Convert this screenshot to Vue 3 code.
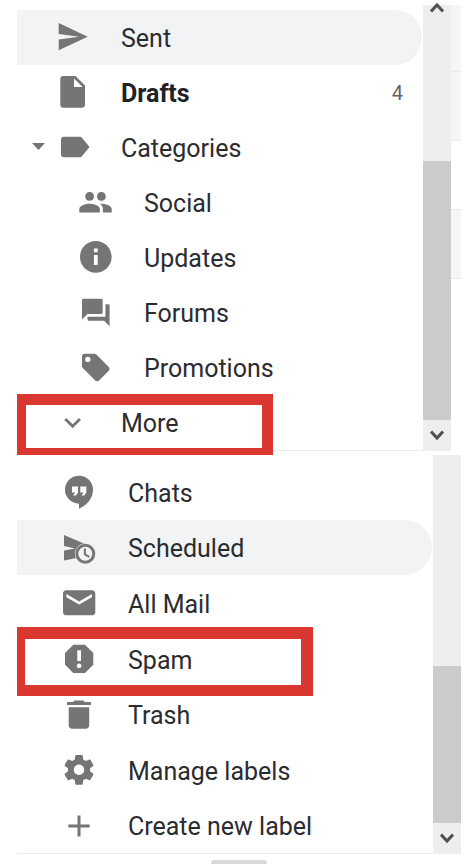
<script setup>
const folders = [
  { id: 'sent', label: 'Sent', active: true },
  { id: 'drafts', label: 'Drafts', bold: true, count: 4 },
  { id: 'categories', label: 'Categories', caret: true },
  { id: 'social', label: 'Social', nested: true },
  { id: 'updates', label: 'Updates', nested: true },
  { id: 'forums', label: 'Forums', nested: true },
  { id: 'promotions', label: 'Promotions', nested: true },
  { id: 'more', label: 'More', mark: 'mark-more' },
]

const extras = [
  { id: 'chats', label: 'Chats' },
  { id: 'scheduled', label: 'Scheduled', active: true },
  { id: 'all-mail', label: 'All Mail' },
  { id: 'spam', label: 'Spam', mark: 'mark-spam' },
  { id: 'trash', label: 'Trash' },
  { id: 'manage', label: 'Manage labels' },
  { id: 'create', label: 'Create new label' },
]

const panels = [
  { id: 'upper', name: 'Folders', rows: folders },
  { id: 'lower', name: 'More folders', rows: extras },
]

const icons = {
  sent: { d: 'M4.7 4L33.7 17.7 4.7 31.3V20.6L25 17.7 4.7 15z' },
  drafts: { d: 'M9.3 2H21.5L31 11.5V30.7a3 3 0 0 1-3 3H9.3a3 3 0 0 1-3-3V5a3 3 0 0 1 3-3zM20 4.6V13H28.6z' },
  categories: { d: 'M10 7.7H25.5c1.2 0 2 .5 2.7 1.4L35.5 18l-7.3 8.9c-.7.9-1.5 1.4-2.7 1.4H10a3 3 0 0 1-3-3V10.7a3 3 0 0 1 3-3z' },
  social: {
    t: 'translate(.83 .63) scale(1.473)',
    d: 'M16 11c1.66 0 2.99-1.34 2.99-3S17.66 5 16 5c-1.66 0-3 1.34-3 3s1.34 3 3 3zm-8 0c1.66 0 2.99-1.34 2.99-3S9.66 5 8 5C6.34 5 5 6.34 5 8s1.34 3 3 3zm0 2c-2.33 0-7 1.17-7 3.5V19h14v-2.5c0-2.33-4.67-3.5-7-3.5zm8 0c-.29 0-.62.02-.97.05 1.16.84 1.97 1.97 1.97 3.45V19h6v-2.5c0-2.33-4.67-3.5-7-3.5z',
  },
  updates: {
    t: 'translate(-.16 -1.06) scale(1.58)',
    d: 'M12 2C6.48 2 2 6.48 2 12s4.48 10 10 10 10-4.48 10-10S17.52 2 12 2zm1.2 15.2h-2.4v-6.4h2.4zm0-8.2h-2.4V6.7h2.4z',
  },
  forums: {
    t: 'translate(2.24 1.94) scale(1.38)',
    d: 'M21 6h-2v9H6v2c0 .55.45 1 1 1h11l4 4V7c0-.55-.45-1-1-1zm-4 6V3c0-.55-.45-1-1-1H3c-.55 0-1 .45-1 1v14l4-4h10c.55 0 1-.45 1-1z',
  },
  promotions: {
    t: 'translate(2.24 1.94) scale(1.38)',
    d: 'M21.41 11.58l-9-9C12.05 2.22 11.55 2 11 2H4c-1.1 0-2 .9-2 2v7c0 .55.22 1.05.59 1.42l9 9c.36.36.86.58 1.41.58.55 0 1.05-.22 1.41-.59l7-7c.37-.36.59-.86.59-1.41 0-.55-.23-1.06-.59-1.42zM6.2 8.1a1.9 1.9 0 1 1 0-3.8 1.9 1.9 0 0 1 0 3.8z',
  },
  more: {
    t: 'translate(1.96 2.06) scale(1.39)',
    d: 'M16.59 8.59L12 13.17 7.41 8.59 6 10l6 6 6-6z',
  },
  chats: {
    d: 'M18 1.7A14 14 0 0 1 32 15.7C32 24 26 31.5 18 34.7V29.7A14 14 0 0 1 18 1.7zM11 12.4V18.4H14.2L12.2 21.4H15L17 18.4V12.4zM19.3 12.4V18.4H22.5L20.5 21.4H23.3L25.3 18.4V12.4z',
  },
  scheduled: {
    d: 'M3 5L29.5 16.2 24.3 23.8 15.5 28 3 30.6V20.6L14 18.4 3 16z',
    clock: true,
  },
  'all-mail': {
    t: 'translate(-1.23 -.94) scale(1.615 1.56)',
    d: 'M20 4H4c-1.1 0-2 .9-2 2v12c0 1.1.9 2 2 2h16c1.1 0 2-.9 2-2V6c0-1.1-.9-2-2-2zm-.1 4.4L12 13.1 4.1 8.4V6.4L12 11.1l7.9-4.7z',
  },
  spam: {
    t: 'translate(-.7 -1) scale(1.57)',
    d: 'M15.73 3H8.27L3 8.27v7.46L8.27 21h7.46L21 15.73V8.27L15.73 3zM12 17.9c-.9 0-1.5-.7-1.5-1.5s.7-1.5 1.5-1.5 1.5.7 1.5 1.5-.7 1.5-1.5 1.5zm1.2-4.5h-2.4V6.5h2.4z',
  },
  trash: {
    t: 'translate(-2.55 -1.3) scale(1.71 1.57)',
    d: 'M6 19c0 1.1.9 2 2 2h8c1.1 0 2-.9 2-2V7.4H6zM19 4h-3.5l-1-1h-5l-1 1H5v2h14z',
  },
  manage: {
    t: 'translate(.2 0) scale(1.485)',
    d: 'M19.43 12.98c.04-.32.07-.64.07-.98s-.03-.66-.07-.98l2.11-1.65c.19-.15.24-.42.12-.64l-2-3.46c-.12-.22-.39-.3-.61-.22l-2.49 1c-.52-.4-1.08-.73-1.69-.98l-.38-2.65C14.46 2.18 14.25 2 14 2h-4c-.25 0-.46.18-.49.42l-.38 2.65c-.61.25-1.17.59-1.69.98l-2.49-1c-.23-.09-.49 0-.61.22l-2 3.46c-.13.22-.07.49.12.64l2.11 1.65c-.04.32-.07.65-.07.98s.03.66.07.98l-2.11 1.65c-.19.15-.24.42-.12.64l2 3.46c.12.22.39.3.61.22l2.49-1c.52.4 1.08.73 1.69.98l.38 2.65c.03.24.24.42.49.42h4c.25 0 .46-.18.49-.42l.38-2.65c.61-.25 1.17-.59 1.69-.98l2.49 1c.23.09.49 0 .61-.22l2-3.46c.12-.22.07-.49-.12-.64l-2.11-1.65zM12 15.5c-1.93 0-3.5-1.57-3.5-3.5s1.57-3.5 3.5-3.5 3.5 1.57 3.5 3.5-1.57 3.5-3.5 3.5z',
  },
  create: { d: 'M16.5 7.4H19.5V16.5H28.7V19.5H19.5V28.6H16.5V19.5H7.3V16.5H16.5z' },
}
</script>

<template>
  <main class="page">
    <section v-for="panel in panels" :key="panel.id" class="panel" :class="panel.id">
      <nav class="list" :aria-label="panel.name">
        <a
          v-for="row in panel.rows"
          :key="row.id"
          :href="'#' + row.id"
          class="row"
          :class="{ active: row.active, bold: row.bold, nested: row.nested }"
        >
          <svg v-if="row.caret" class="caret" viewBox="0 0 13 7" aria-hidden="true">
            <path d="M0 0h13L6.5 7z" />
          </svg>
          <svg class="icon" viewBox="0 0 37 37" aria-hidden="true">
            <path :d="icons[row.id].d" :transform="icons[row.id].t" fill-rule="evenodd" />
            <g v-if="icons[row.id].clock">
              <circle class="clock-gap" cx="24.3" cy="23.8" r="10.5" />
              <circle class="clock-face" cx="24.3" cy="23.8" r="8.5" />
              <path class="clock-hand" d="M23.9 18.5V24.3L28.3 26.8" />
            </g>
          </svg>
          <span class="label">{{ row.label }}</span>
          <span v-if="row.count" class="count">{{ row.count }}</span>
          <span v-if="row.mark" class="mark" :class="row.mark"></span>
        </a>
      </nav>
      <div class="scrollbar">
        <button v-if="panel.id === 'upper'" class="arrow up" type="button" aria-label="Scroll up">
          <svg viewBox="0 0 14 11"><path d="M1 9.5L7 3L13 9.5" /></svg>
        </button>
        <div class="thumb"></div>
        <button class="arrow down" type="button" aria-label="Scroll down">
          <svg viewBox="0 0 14 11"><path d="M1 1.5L7 8L13 1.5" /></svg>
        </button>
      </div>
      <div v-if="panel.id === 'upper'" class="edge">
        <span></span><span></span><span class="blank"></span><span></span>
      </div>
    </section>
    <div class="handle"></div>
  </main>
</template>

<style>
body {
  background: #fff;
}
</style>

<style scoped>
.page {
  padding: 5px 13px 3px 17px;
  font-family: Roboto, "Liberation Sans", sans-serif;
  font-size: 25px;
  line-height: 28px;
  color: #2b2c30;
}

.panel {
  display: flex;
}

.upper {
  margin-bottom: 4px;
}

.list {
  flex: 1;
  display: flex;
  flex-direction: column;
  border-bottom: 1px solid #ececee;
}

.upper .list {
  padding-top: 5px;
}

.lower .list {
  padding-top: 9px;
  min-height: 389px;
}

.row {
  position: relative;
  display: flex;
  flex: 1 0 55px;
  box-sizing: border-box;
  align-items: center;
  gap: 30px;
  margin-right: 1px;
  padding: 0 19px 0 37px;
  border-radius: 0 28px 28px 0;
  color: inherit;
  text-decoration: none;
}

.lower .row {
  padding-top: 2px;
  padding-left: 44px;
}

.row.nested {
  padding-left: 60px;
}

.active {
  background: #f1f3f4;
}

.label {
  padding-top: 2px;
}

.bold .label {
  font-weight: 700;
  color: #202124;
}

.icon {
  flex: none;
  width: 37px;
  height: 37px;
  fill: #757575;
}

.clock-gap {
  fill: #f1f3f4;
}

.clock-face {
  fill: #f1f3f4;
  stroke: #757575;
  stroke-width: 3;
}

.clock-hand {
  fill: none;
  stroke: #757575;
  stroke-width: 2;
}

.caret {
  position: absolute;
  left: 15px;
  top: 23px;
  width: 13px;
  height: 7px;
  fill: #757575;
}

.count {
  margin-left: auto;
  font-size: 20px;
  color: #5f6368;
}

.mark {
  position: absolute;
  left: 0;
  box-sizing: border-box;
  border: solid #db3731;
}

.mark-more {
  top: -1px;
  bottom: -5px;
  width: 256px;
  border-width: 11px 11px 7px 9px;
}

.mark-spam {
  top: -4px;
  bottom: -10px;
  width: 296px;
  border-width: 12px 12px 11px 8px;
}

.scrollbar {
  display: flex;
  flex-direction: column;
  justify-content: flex-end;
  width: 28px;
  background: #eee;
}

.thumb {
  background: #cbcbcb;
}

.upper .thumb {
  height: 259px;
}

.lower .thumb {
  height: 157px;
}

.arrow {
  display: flex;
  justify-content: center;
  padding: 0;
  border: 0;
  background: #eee;
}

.arrow svg {
  width: 14px;
  height: 11px;
  fill: none;
  stroke: #505050;
  stroke-width: 3;
}

.up {
  margin-bottom: auto;
  height: 8px;
  align-items: flex-end;
}

.down {
  height: 31px;
  align-items: center;
}

.edge {
  width: 10px;
}

.edge span {
  display: block;
  height: 68px;
  border-bottom: 1px solid #e9ebeb;
  background: #f5f7f7;
}

.edge span:first-child {
  height: 66px;
}

.edge .blank {
  background: #fff;
}

.handle {
  width: 56px;
  height: 4px;
  margin: 6px auto 0;
  border-radius: 3px 3px 0 0;
  background: #dadadd;
}
</style>
